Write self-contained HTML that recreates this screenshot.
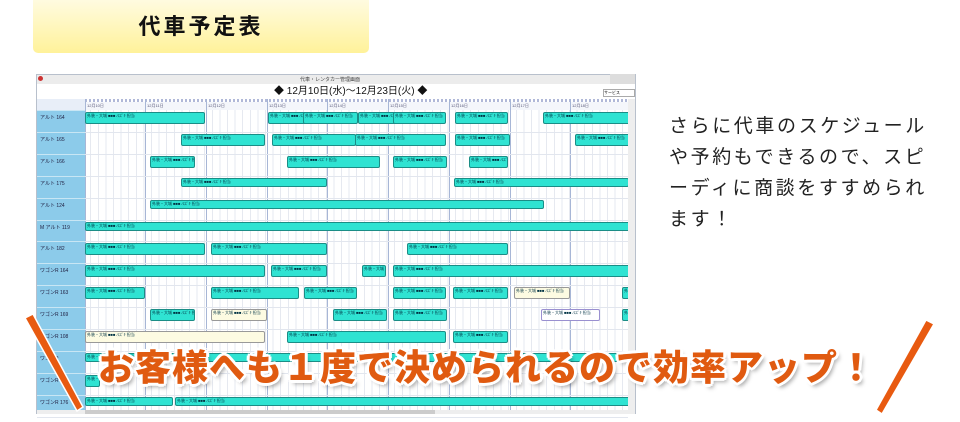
<!DOCTYPE html>
<html><head><meta charset="utf-8">
<style>
body{margin:0;width:960px;height:422px;background:#fff;position:relative;overflow:hidden;font-family:"Liberation Sans","Noto Sans CJK JP",sans-serif}
.title{position:absolute;left:33px;top:0;width:336px;height:53px;border-radius:0 0 5px 5px;background:linear-gradient(#fffbe0,#fff29a);text-align:center;line-height:54px;font-size:22px;font-weight:bold;letter-spacing:3px;color:#111}
.win{position:absolute;left:36px;top:74px;width:600px;height:340px;border:1px solid #b8c0cc;background:#fff;box-sizing:border-box}
.a{position:absolute}
.bar{position:absolute;height:10px;background:#2fe3d2;border:1px solid #1b8d86;border-radius:2px;box-sizing:border-box;font-size:4px;color:#034;overflow:hidden;white-space:nowrap;line-height:5px;padding-left:1px}
.cream{background:#fdfbe2;border-color:#999}
.lav{background:#fff;border-color:#9a90d0}
.lbl{position:absolute;left:37px;width:47px;font-size:5px;color:#224;padding-left:3px;box-sizing:border-box}
.side{position:absolute;left:669px;top:111px;font-size:19px;line-height:31px;letter-spacing:2.6px;color:#222}
.big{position:absolute;left:98px;top:339px;font-size:36px;font-weight:900;color:#e05a10;letter-spacing:1px;white-space:nowrap;text-shadow:2px 2px 0 #fff,-2px -2px 0 #fff,2px -2px 0 #fff,-2px 2px 0 #fff,0 3px 0 #fff,3px 0 0 #fff,-3px 0 0 #fff,0 -3px 0 #fff,3px 4px 4px rgba(0,0,0,.35)}
</style></head><body>
<div class="title">代車予定表</div>
<div class="win"></div>
<div class="a" style="left:37px;top:75px;width:598px;height:9px;background:#ececec"></div>
<div class="a" style="left:38px;top:76px;width:5px;height:5px;background:#c33;border-radius:50%"></div>
<div class="a" style="left:300px;top:76px;font-size:5px;color:#444">代車・レンタカー管理画面</div>
<div class="a" style="left:610px;top:74px;width:25px;height:10px;background:#ddd"></div>
<div class="a" style="left:274px;top:86px;font-size:10px;line-height:12px;color:#111">◆ 12月10日(水)～12月23日(火) ◆</div>
<div class="a" style="left:603px;top:89px;width:30px;height:6px;border:1px solid #aaa;font-size:4px">サービス</div>
<div id="g"></div>
<div class="side">さらに代車のスケジュール<br>や予約もできるので、スピ<br>ーディに商談をすすめられ<br>ます！</div>
<svg class="a" style="left:0;top:0" width="960" height="422">
<polygon points="25,318 33,314 83,407 77,411" fill="#e85a10" stroke="#fff" stroke-width="1.5"/>
<polygon points="926,320 934,324 882,414 876,410" fill="#e85a10" stroke="#fff" stroke-width="1.5"/>
</svg>
<div class="big">お客様へも１度で決められるので効率アップ！</div>
<script>
var g=document.getElementById('g'),h='';
var T0=111,P=21.9;
h+='<div class="a" style="left:37px;top:99px;width:591px;height:311px;background:repeating-linear-gradient(90deg,#e6e9f0 0 1px,transparent 1px 7.6px)"></div>';
h+='<div class="a" style="left:37px;top:99px;width:48px;height:311px;background:#8ccbea"></div>';
h+='<div class="a" style="left:37px;top:99px;width:48px;height:12px;background:#e8eef8"></div>';
h+='<div class="a" style="left:85px;top:99px;width:543px;height:3px;background:repeating-linear-gradient(90deg,#b0b8d8 0 2px,#fff 2px 4px)"></div>';
h+='<div class="a" style="left:85px;top:102px;width:543px;height:8px;background:#f4f6fb"></div>';
var xs=[85,145,206,267,327,388,449,510,570,631];
xs.forEach(function(x,i){h+='<div class="a" style="left:'+x+'px;top:99px;width:1px;height:311px;background:#a7b6d6"></div>';if(i<9)h+='<div class="a" style="left:'+(x+2)+'px;top:103px;font-size:4px;color:#557">12月'+(10+i)+'日</div>';});
var L=['アルト 164','アルト 165','アルト 166','アルト 175','アルト 124','M アルト 119','アルト 182','ワゴンR 164','ワゴンR 163','ワゴンR 169','ワゴンR 108','ワゴンR','ワゴンR','ワゴンR 176'];
for(var i=0;i<14;i++){var t=T0+P*i;h+='<div class="lbl" style="top:'+(t+3)+'px;height:12px">'+L[i]+'</div>';h+='<div class="a" style="left:37px;top:'+(t+P-1)+'px;width:591px;height:1px;background:#e2e6ee"></div>';h+='<div class="a" style="left:37px;top:'+(t-1)+'px;width:48px;height:1px;background:#c8e6f4"></div>';}
var B=[[0,85,205],[0,268,326],[0,303,358],[0,358,407],[0,393,446],[0,455,508],[0,543,630],
[1,181,265],[1,272,356],[1,355,446],[1,455,510],[1,575,632],
[2,150,195],[2,287,380],[2,393,447],[2,469,508],
[3,181,327],[3,454,629],[4,150,544],[5,85,632],
[6,85,205],[6,211,327],[6,407,508],
[7,85,265],[7,271,327],[7,362,386],[7,393,632],
[8,85,145],[8,211,299],[8,304,357],[8,393,446],[8,453,508],[8,514,570,'cream'],[8,622,632],
[9,150,195],[9,211,267,'cream'],[9,333,387],[9,393,447],[9,541,600,'lav'],[9,622,632],
[10,85,265,'cream'],[10,287,446],[10,453,508],[11,85,632],[12,85,100],[13,85,173],[13,175,632]];
B.forEach(function(b){var t=T0+P*b[0]+1;var hh=(b[0]==3||b[0]==4||b[0]==5||b[0]==11||b[0]==13)?9:12;h+='<div class="bar '+(b[3]||'')+'" style="left:'+b[1]+'px;top:'+t+'px;width:'+(b[2]-b[1])+'px;height:'+hh+'px">外装・大城 ■■■ /ｽｽﾞｷ 担当</div>';});
h+='<div class="a" style="left:628px;top:99px;width:7px;height:311px;background:#eee"></div>';
h+='<div class="a" style="left:37px;top:410px;width:598px;height:4px;background:#eee"></div>';
h+='<div class="a" style="left:85px;top:410px;width:350px;height:4px;background:#ccc"></div>';
g.innerHTML=h;
</script>
</body></html>
